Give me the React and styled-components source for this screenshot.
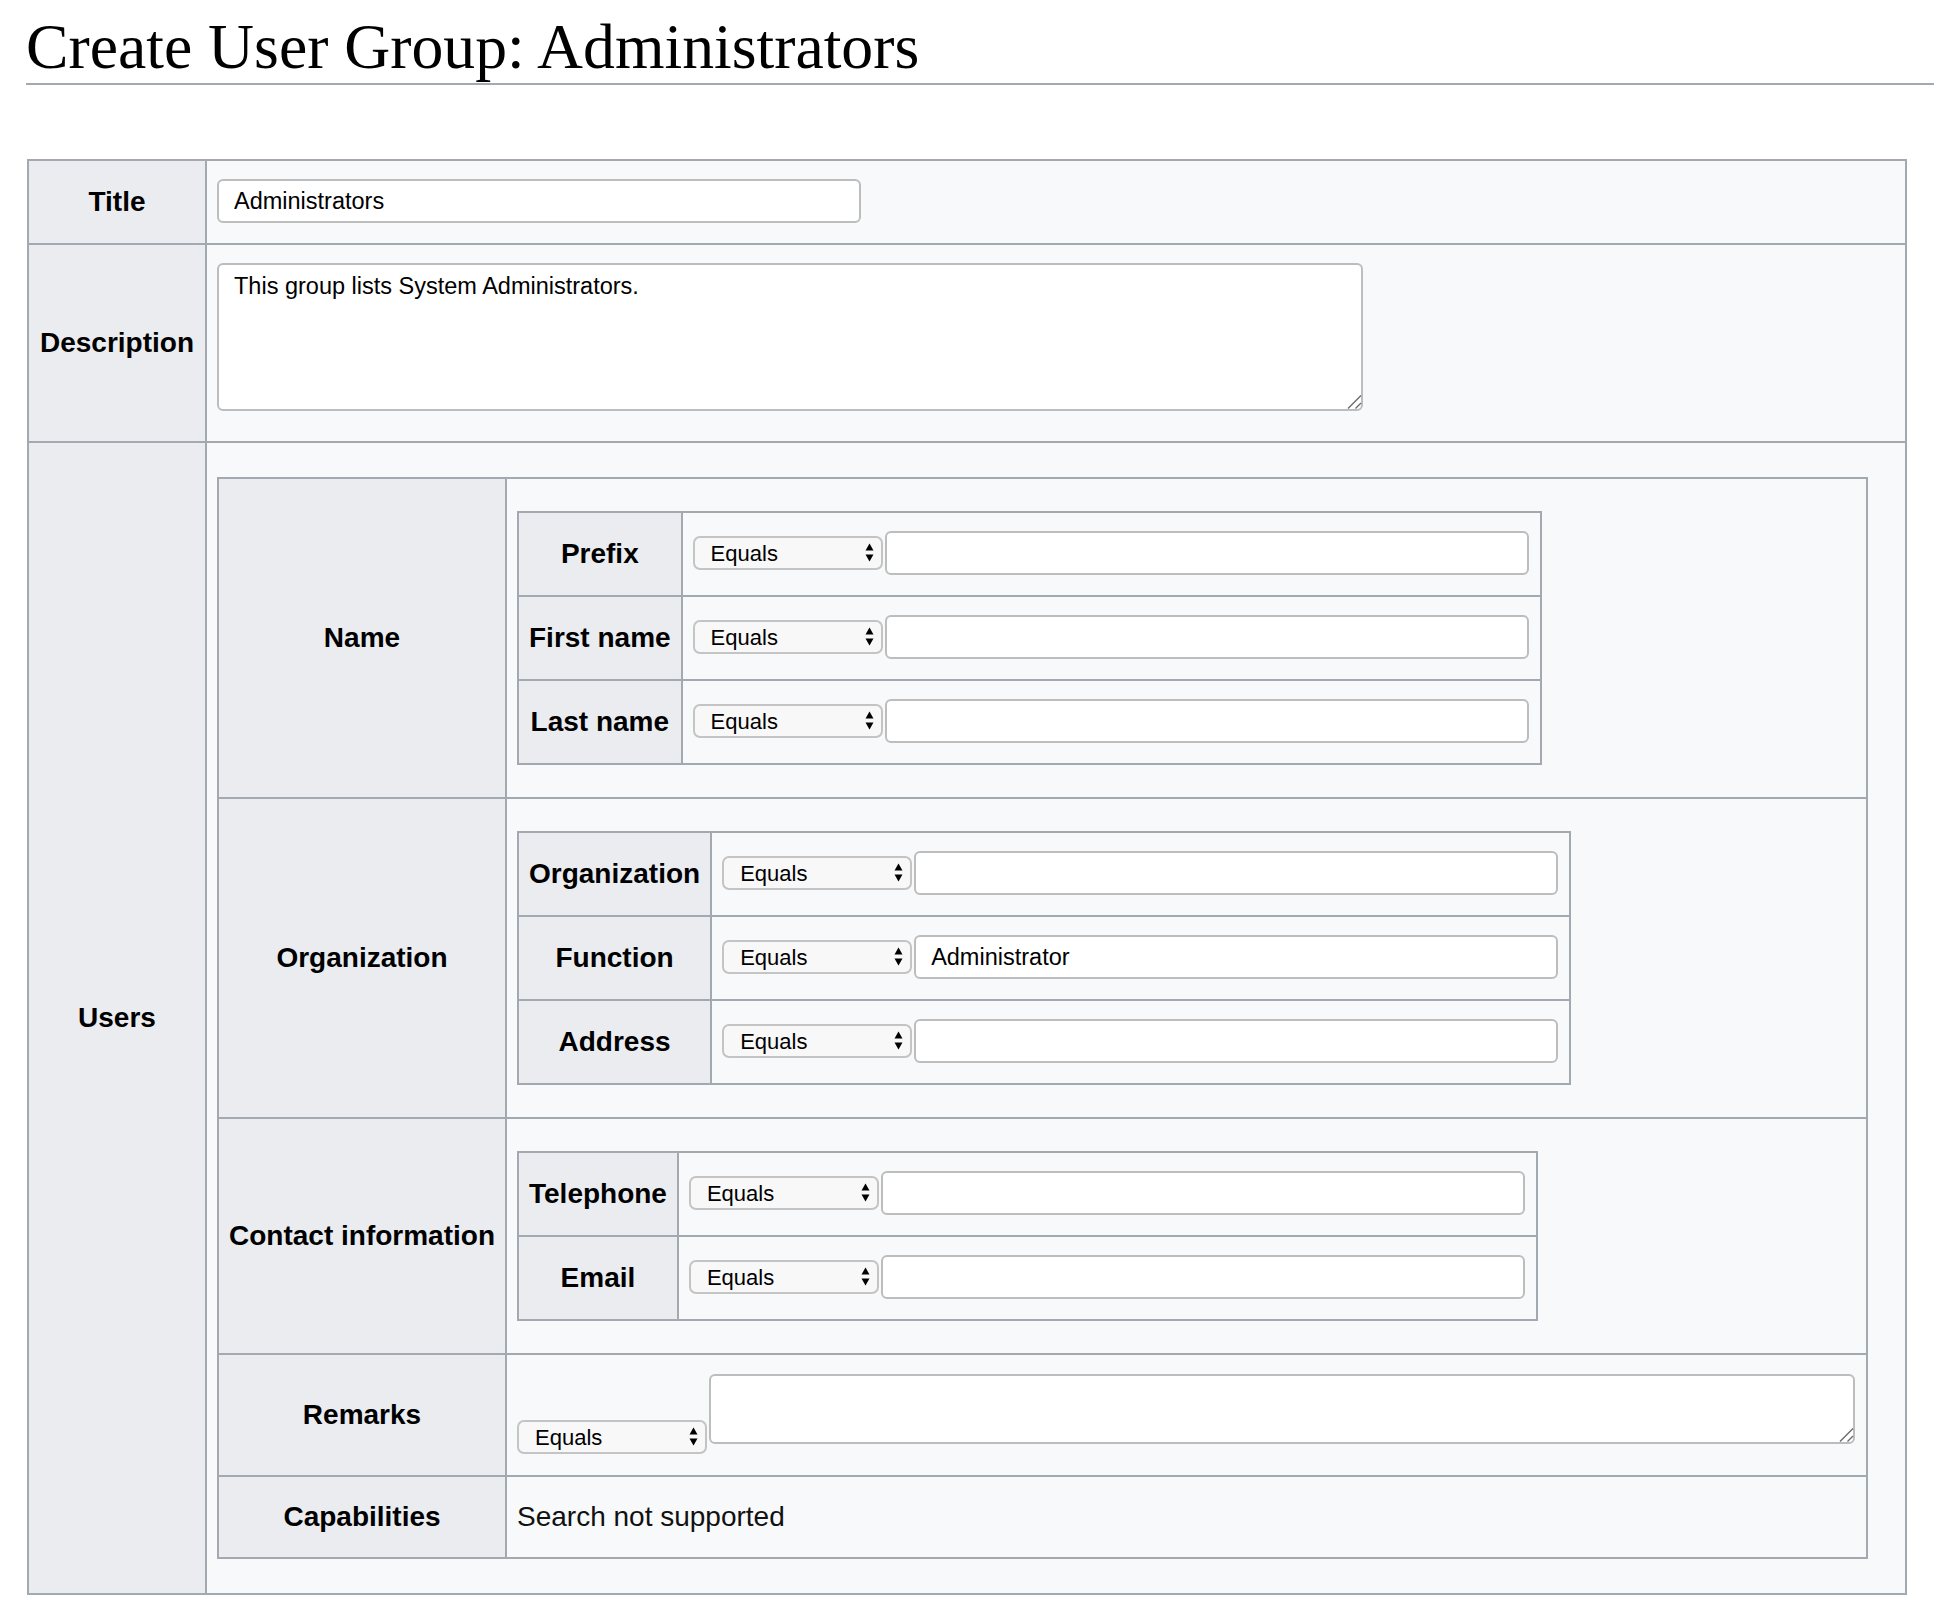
import React from "react";
import styled, { createGlobalStyle } from "styled-components";

const GlobalStyle = createGlobalStyle`
  html, body {
    margin: 0;
    padding: 0;
    background: #fff;
  }
  body {
    font-family: "Liberation Sans", Arial, sans-serif;
    color: #000;
  }
`;

const groups = [
  {
    label: "Name",
    fields: [{ label: "Prefix" }, { label: "First name" }, { label: "Last name" }],
  },
  {
    label: "Organization",
    fields: [
      { label: "Organization" },
      { label: "Function", value: "Administrator" },
      { label: "Address" },
    ],
  },
  {
    label: "Contact information",
    fields: [{ label: "Telephone" }, { label: "Email" }],
  },
];

const Arrows = () => (
  <ArrowIcon width="9" height="19" viewBox="0 0 9 19">
    <polygon points="0.5,7.5 4.5,0.5 8.5,7.5" fill="#000" />
    <polygon points="0.5,11.5 8.5,11.5 4.5,18.5" fill="#000" />
  </ArrowIcon>
);

const Operator = () => (
  <SelectWrap>
    <Select defaultValue="eq">
      <option value="eq">Equals</option>
      <option value="contains">Contains</option>
      <option value="starts">Starts with</option>
    </Select>
    <Arrows />
  </SelectWrap>
);

const Area = ({ w, h, value, mb }) => (
  <AreaWrap $w={w} $h={h} $mb={mb}>
    <TextArea defaultValue={value} />
    <Resizer width="15" height="15" viewBox="0 0 15 15">
      <path d="M1 14.5L14 1.5M8.5 14.5L14 9" stroke="#6b6b6b" strokeWidth="1.4" />
    </Resizer>
  </AreaWrap>
);

const FieldTable = ({ fields }) => (
  <Grid>
    <tbody>
      {fields.map((f) => (
        <tr key={f.label}>
          <Label>{f.label}</Label>
          <Cell $pad="18px 11px 20px 10px">
            <Controls>
              <Operator />
              <TextInput defaultValue={f.value || ""} />
            </Controls>
          </Cell>
        </tr>
      ))}
    </tbody>
  </Grid>
);

const App = () => {
  return (
    <>
      <GlobalStyle />
      <Page>
        <Heading>Create User Group: Administrators</Heading>
        <Grid>
          <tbody>
            <tr>
              <Label $w={156}>Title</Label>
              <Cell $pad="18px 10px 20px">
                <TextInput defaultValue="Administrators" />
              </Cell>
            </tr>
            <tr>
              <Label $w={156}>Description</Label>
              <Cell $pad="18px 10px 30px">
                <Area w={1146} h={148} value="This group lists System Administrators." />
              </Cell>
            </tr>
            <tr>
              <Label $w={156}>Users</Label>
              <Cell $pad="34px 37px 34px 10px">
                <Grid>
                  <tbody>
                    {groups.map((g) => (
                      <tr key={g.label}>
                        <Label>{g.label}</Label>
                        <Cell $pad="32px 10px">
                          <FieldTable fields={g.fields} />
                        </Cell>
                      </tr>
                    ))}
                    <tr>
                      <Label>Remarks</Label>
                      <Cell $pad="19px 11px 21px 10px">
                        <Controls $align="flex-end">
                          <Operator />
                          <Area w={1146} h={70} value="" mb={10} />
                        </Controls>
                      </Cell>
                    </tr>
                    <tr>
                      <Label>Capabilities</Label>
                      <Cell $pad="24px 10px">
                        <Note>Search not supported</Note>
                      </Cell>
                    </tr>
                  </tbody>
                </Grid>
              </Cell>
            </tr>
          </tbody>
        </Grid>
      </Page>
    </>
  );
};

const Page = styled.div`
  padding: 0 0 15px 27px;
`;

const Heading = styled.h1`
  margin: 0 0 74px -1px;
  padding: 12px 0 1px;
  font-family: "Liberation Serif", "Times New Roman", serif;
  font-weight: normal;
  font-size: 63.7px;
  line-height: 70px;
  color: #000;
  border-bottom: 2px solid #a2a9b1;
`;

const Grid = styled.table`
  border-collapse: separate;
  border-spacing: 0;
  border-top: 2px solid #a2a9b1;
  border-left: 2px solid #a2a9b1;
  font-size: 28px;
`;

const Label = styled.th`
  background: #eaecf0;
  border-right: 2px solid #a2a9b1;
  border-bottom: 2px solid #a2a9b1;
  padding: 0 10px;
  text-align: center;
  vertical-align: middle;
  font-weight: bold;
  white-space: nowrap;
  color: #000;
  width: ${(p) => (p.$w ? `${p.$w}px` : "auto")};
`;

const Cell = styled.td`
  background: #f8f9fa;
  border-right: 2px solid #a2a9b1;
  border-bottom: 2px solid #a2a9b1;
  padding: ${(p) => p.$pad};
  vertical-align: middle;
  text-align: left;
`;

const Controls = styled.div`
  display: flex;
  align-items: ${(p) => p.$align || "center"};
  gap: 2px;
`;

const SelectWrap = styled.div`
  position: relative;
  flex: none;
  width: 190px;
  height: 34px;
`;

const Select = styled.select`
  appearance: none;
  -webkit-appearance: none;
  box-sizing: border-box;
  display: block;
  width: 100%;
  height: 100%;
  margin: 0;
  border: 2px solid #c4c4c4;
  border-radius: 7px;
  background: #f8f8f8;
  padding: 0 0 0 16px;
  font-family: "Liberation Sans", Arial, sans-serif;
  font-size: 22px;
  color: #000;
  outline: none;
`;

const ArrowIcon = styled.svg`
  position: absolute;
  right: 9px;
  top: 7px;
  pointer-events: none;
`;

const TextInput = styled.input`
  box-sizing: border-box;
  display: block;
  flex: none;
  width: 644px;
  height: 44px;
  margin: 0;
  border: 2px solid #bdbdbd;
  border-radius: 6px;
  background: #fff;
  padding: 0 15px;
  font-family: "Liberation Sans", Arial, sans-serif;
  font-size: 23.5px;
  color: #000;
  outline: none;
`;

const AreaWrap = styled.div`
  position: relative;
  flex: none;
  width: ${(p) => p.$w}px;
  height: ${(p) => p.$h}px;
  margin-bottom: ${(p) => p.$mb || 0}px;
`;

const TextArea = styled.textarea`
  box-sizing: border-box;
  display: block;
  width: 100%;
  height: 100%;
  margin: 0;
  resize: none;
  border: 2px solid #bdbdbd;
  border-radius: 6px;
  background: #fff;
  padding: 8px 15px;
  font-family: "Liberation Sans", Arial, sans-serif;
  font-size: 23.5px;
  line-height: 27px;
  color: #000;
  outline: none;
`;

const Resizer = styled.svg`
  position: absolute;
  right: 1px;
  bottom: 2px;
  pointer-events: none;
`;

const Note = styled.span`
  font-size: 28px;
  color: #111;
`;

export default App;
